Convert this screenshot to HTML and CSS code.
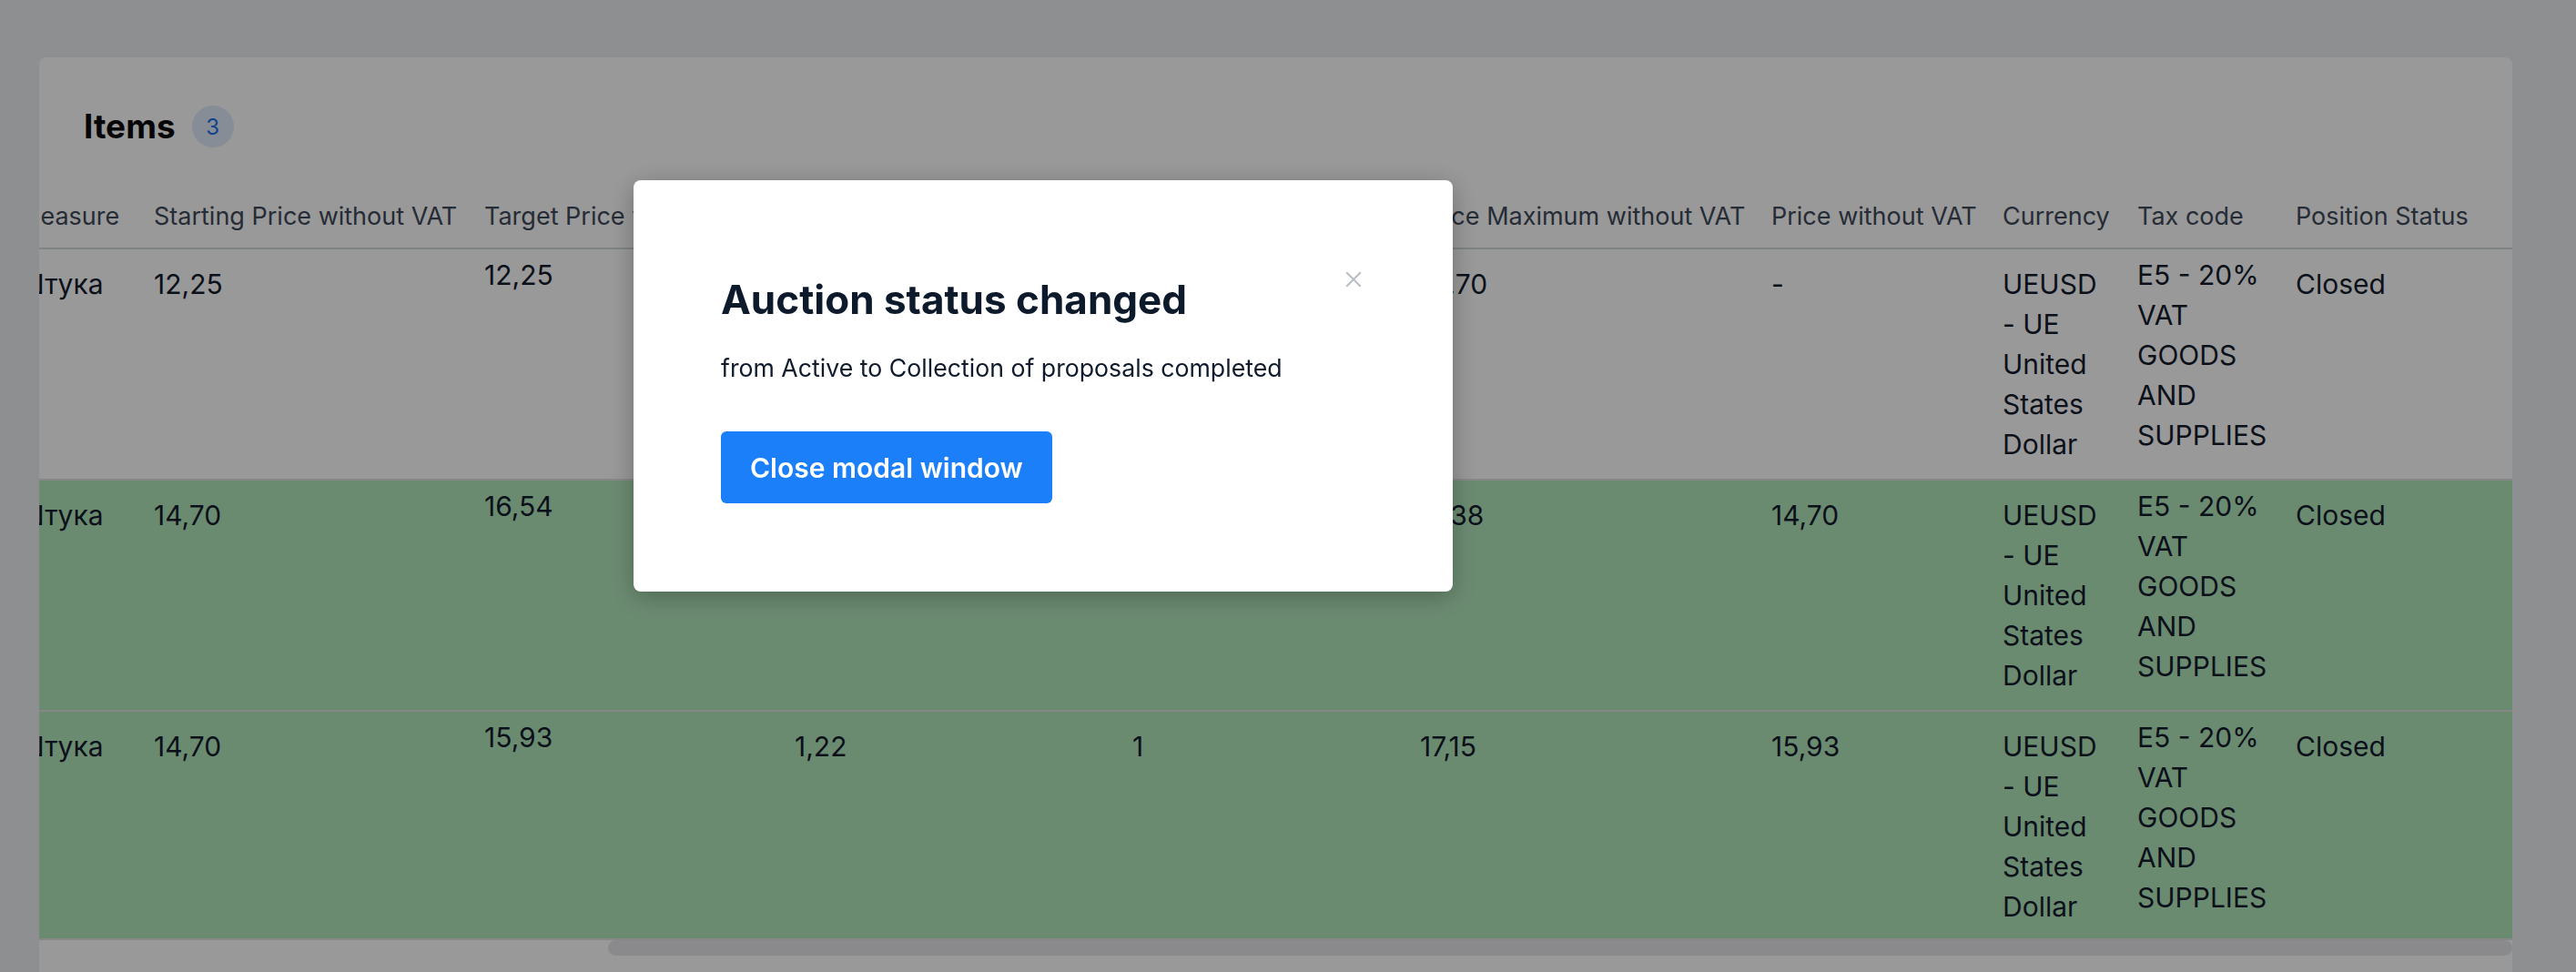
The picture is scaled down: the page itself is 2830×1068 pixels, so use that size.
FILE: index.html
```html
<!DOCTYPE html>
<html lang="en">
<head>
    <meta charset="UTF-8">
    <meta name="viewport" content="width=device-width, initial-scale=1.0">
    <title>Auction Items</title>
    <link rel="stylesheet" href="styles.css">
</head>
<body>
    <div class="card">
        <div class="card-title">
            <h2>Items</h2>
            <span class="badge">3</span>
        </div>
        <div class="table-scroll" id="itemsScroll">
            <table class="items-table">
                <colgroup>
                    <col style="width: 80px">
                    <col style="width: 300px">
                    <col style="width: 200px">
                    <col style="width: 193px">
                    <col style="width: 149px">
                    <col style="width: 363px">
                    <col style="width: 341px">
                    <col style="width: 371px">
                    <col style="width: 316px">
                    <col style="width: 386px">
                    <col style="width: 254px">
                    <col style="width: 148px">
                    <col style="width: 174px">
                    <col style="width: 254px">
                </colgroup>
                <thead>
                    <tr>
                        <th>№</th>
                        <th>Name</th>
                        <th>Code</th>
                        <th>Quantity</th>
                        <th>Measure</th>
                        <th>Starting Price without VAT</th>
                        <th>Target Price without VAT</th>
                        <th>Price Step without VAT</th>
                        <th>Number of Lots</th>
                        <th>Price Maximum without VAT</th>
                        <th>Price without VAT</th>
                        <th>Currency</th>
                        <th>Tax code</th>
                        <th>Position Status</th>
                    </tr>
                </thead>
                <tbody>
                    <tr>
                        <td>1</td>
                        <td>Paper A4</td>
                        <td>100245</td>
                        <td>1</td>
                        <td>Штука</td>
                        <td>12,25</td>
                        <td class="raised">12,25</td>
                        <td>1,22</td>
                        <td>1</td>
                        <td>14,70</td>
                        <td>-</td>
                        <td>UEUSD - UE United States Dollar</td>
                        <td class="raised">E5 - 20% VAT GOODS AND SUPPLIES</td>
                        <td>Closed</td>
                    </tr>
                    <tr class="won">
                        <td>2</td>
                        <td>Paper A3</td>
                        <td>100246</td>
                        <td>1</td>
                        <td>Штука</td>
                        <td>14,70</td>
                        <td class="raised">16,54</td>
                        <td>1,22</td>
                        <td>1</td>
                        <td>17,38</td>
                        <td>14,70</td>
                        <td>UEUSD - UE United States Dollar</td>
                        <td class="raised">E5 - 20% VAT GOODS AND SUPPLIES</td>
                        <td>Closed</td>
                    </tr>
                    <tr class="won">
                        <td>3</td>
                        <td>Folder</td>
                        <td>100247</td>
                        <td>1</td>
                        <td>Штука</td>
                        <td>14,70</td>
                        <td class="raised">15,93</td>
                        <td>1,22</td>
                        <td>1</td>
                        <td>17,15</td>
                        <td>15,93</td>
                        <td>UEUSD - UE United States Dollar</td>
                        <td class="raised">E5 - 20% VAT GOODS AND SUPPLIES</td>
                        <td>Closed</td>
                    </tr>
                </tbody>
            </table>
        </div>
        <div class="scrollbar">
            <div class="scrollbar-thumb" id="itemsThumb"></div>
        </div>
    </div>

    <div class="overlay">
        <div class="modal">
            <button type="button" class="modal-close" aria-label="Close"></button>
            <h3>Auction status changed</h3>
            <p>from Active to Collection of proposals completed</p>
            <button type="button" class="btn-primary">Close modal window</button>
        </div>
    </div>

    <script>
        // table is shown scrolled to the last column
        const scroller = document.getElementById('itemsScroll');
        const thumb = document.getElementById('itemsThumb');
        scroller.scrollLeft = scroller.scrollWidth;

        function updateThumb() {
            const total = scroller.scrollWidth;
            thumb.style.width = (scroller.clientWidth / total * 100) + '%';
            thumb.style.marginLeft = (scroller.scrollLeft / total * 100) + '%';
        }
        scroller.addEventListener('scroll', updateThumb);
        updateThumb();
    </script>
</body>
</html>
```

FILE: styles.css
```css
body {
    font-family: Inter, "Noto Sans", sans-serif;
    background-color: #edeef2;
    margin: 0;
    padding: 63px 70px 0 43px;
    overflow: hidden;
}
.card {
    background-color: #fff;
    border-radius: 8px;
    padding-top: 53px;
    min-height: 1100px;
}
.card-title {
    display: flex;
    align-items: center;
    gap: 18px;
    padding-left: 49px;
    margin-bottom: 42px;
}
.card-title h2 {
    margin: 0;
    font-size: 37px;
    line-height: 46px;
    font-weight: 700;
    color: #0a0a0a;
}
.badge {
    width: 46px;
    height: 46px;
    border-radius: 50%;
    background-color: #e2ecfa;
    color: #1e6fe8;
    font-size: 24px;
    display: flex;
    align-items: center;
    justify-content: center;
}
.table-scroll {
    overflow-x: hidden;
}
.items-table {
    table-layout: fixed;
    width: 3529px;
    border-collapse: collapse;
}
.items-table th {
    text-align: left;
    font-weight: 400;
    font-size: 27px;
    line-height: 30px;
    color: #3e4a5a;
    padding: 19px 16px;
    white-space: nowrap;
    overflow: hidden;
    border-bottom: 2px solid #d4dada;
}
.items-table td {
    vertical-align: top;
    font-size: 30px;
    line-height: 44px;
    color: #131c2e;
    padding: 16px;
    border-bottom: 2px solid #e2e2e2;
}
.items-table tr:last-child td {
    padding-bottom: 13px;
}
.items-table td.raised {
    padding-top: 6px;
}
.items-table tr.won td {
    background-color: #b3e8bd;
}
.scrollbar {
    height: 17px;
}
.scrollbar-thumb {
    height: 100%;
    background-color: #e6e7ea;
    border-radius: 9px;
}
.overlay {
    position: fixed;
    inset: 0;
    background-color: rgba(0, 0, 0, 0.4);
}
.modal {
    position: absolute;
    left: 696px;
    top: 198px;
    width: 900px;
    box-sizing: border-box;
    padding: 104px 96px 97px;
    background-color: #fff;
    border-radius: 8px;
    box-shadow: 0 6px 28px rgba(0, 0, 0, 0.28);
}
.modal h3 {
    margin: 0 0 28px;
    font-size: 44px;
    line-height: 54px;
    font-weight: 700;
    color: #0c1a2b;
}
.modal p {
    margin: 0 0 50px;
    font-size: 26.7px;
    line-height: 40px;
    color: #0f1b2d;
}
.modal-close {
    position: absolute;
    top: 100px;
    right: 100px;
    width: 18px;
    height: 18px;
    padding: 0;
    border: none;
    background: none;
    cursor: pointer;
}
.modal-close::before, .modal-close::after {
    content: "";
    position: absolute;
    left: -2px;
    top: 8px;
    width: 22px;
    height: 2px;
    background-color: #b9bdc4;
    transform: rotate(45deg);
}
.modal-close::after {
    transform: rotate(-45deg);
}
.btn-primary {
    font-family: inherit;
    background-color: #1a7ff9;
    color: white;
    border: none;
    height: 79px;
    padding: 0 32px;
    font-size: 30px;
    font-weight: 600;
    border-radius: 6px;
    cursor: pointer;
}
```
